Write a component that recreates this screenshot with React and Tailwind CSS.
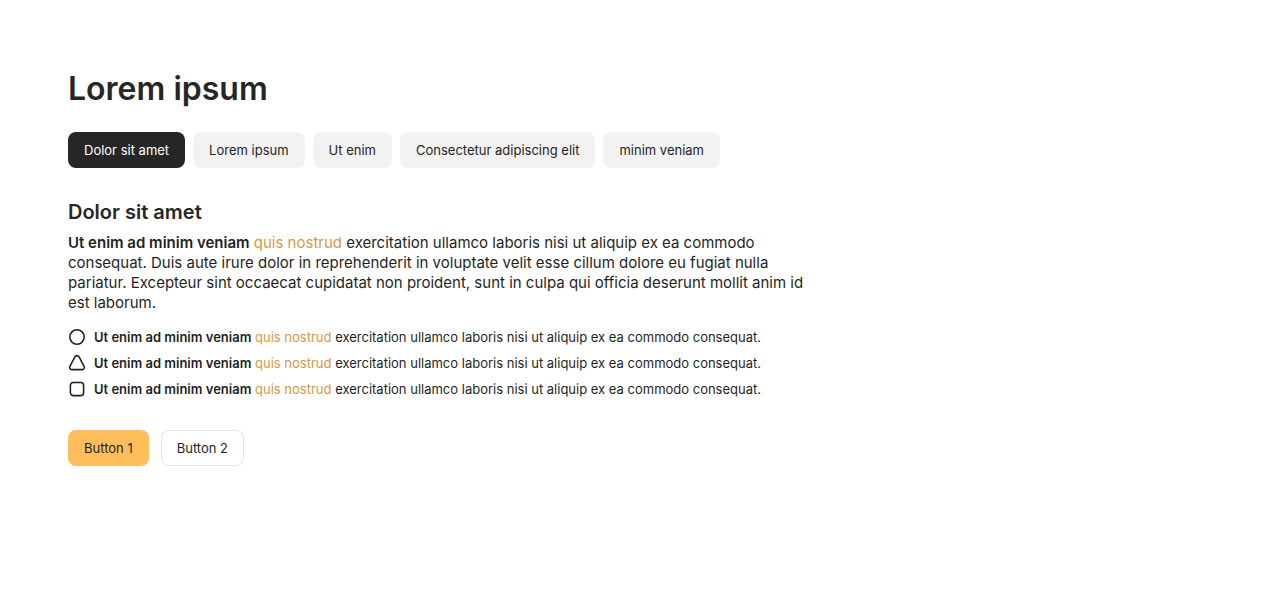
import { useState } from "react";

const tabs = ["Dolor sit amet", "Lorem ipsum", "Ut enim", "Consectetur adipiscing elit", "minim veniam"];

const shapes = [
  { id: "circle", drawing: <circle cx="9" cy="9" r="7.2" /> },
  {
    id: "triangle",
    drawing: (
      <path d="M6.9 2.8 1.9 12.3C1.1 14 2 15.6 3.8 15.6H14.2C16 15.6 16.9 14 16.1 12.3L11.1 2.8C10.2 1.2 7.8 1.2 6.9 2.8Z" />
    ),
  },
  { id: "square", drawing: <rect x="2.4" y="2.4" width="13.2" height="13.2" rx="2.8" /> },
];

function Lead() {
  return (
    <>
      <strong className="font-semibold">Ut enim ad minim veniam</strong>{" "}
      <a href="#" className="text-[#d49a45]">quis nostrud</a>{" "}
    </>
  );
}

export default function App() {
  const [active, setActive] = useState(0);
  return (
    <main className="p-17 font-['Inter',sans-serif] text-[#1f1f1f]">
      <h1 className="text-[32px] leading-[42px] font-semibold text-[#262626]">Lorem ipsum</h1>
      <nav className="mt-[22px] flex flex-wrap gap-2">
        {tabs.map((tab, i) => (
          <button
            key={tab}
            type="button"
            onClick={() => setActive(i)}
            className={`h-9 rounded-lg px-4 text-[13px] leading-5 ${
              i === active ? "bg-[#262626] text-white" : "bg-[#f2f2f2]"
            }`}
          >
            {tab}
          </button>
        ))}
      </nav>
      <section className="mt-8 max-w-[740px]">
        <h2 className="text-xl leading-6 font-semibold text-[#262626]">Dolor sit amet</h2>
        <p className="mt-[9px] text-[15px] leading-5">
          <Lead />
          exercitation ullamco laboris nisi ut aliquip ex ea commodo consequat. Duis aute irure dolor in
          reprehenderit in voluptate velit esse cillum dolore eu fugiat nulla pariatur. Excepteur sint occaecat
          cupidatat non proident, sunt in culpa qui officia deserunt mollit anim id est laborum.
        </p>
        <ul className="mt-[15px] flex flex-col gap-2 text-[13px] leading-[18px]">
          {shapes.map(({ id, drawing }) => (
            <li key={id} className="flex gap-2">
              <svg
                viewBox="0 0 18 18"
                className="size-[18px] shrink-0"
                fill="none"
                stroke="currentColor"
                strokeWidth="1.55"
                strokeLinejoin="round"
                aria-hidden="true"
              >
                {drawing}
              </svg>
              <p>
                <Lead />
                exercitation ullamco laboris nisi ut aliquip ex ea commodo consequat.
              </p>
            </li>
          ))}
        </ul>
      </section>
      <div className="mt-8 flex gap-3">
        <button type="button" className="h-9 rounded-lg bg-[#ffbe5c] px-4 text-[13px] leading-5">
          Button 1
        </button>
        <button
          type="button"
          className="h-9 rounded-lg bg-white px-4 text-[13px] leading-5 inset-ring inset-ring-[#e5e5e5]"
        >
          Button 2
        </button>
      </div>
    </main>
  );
}
